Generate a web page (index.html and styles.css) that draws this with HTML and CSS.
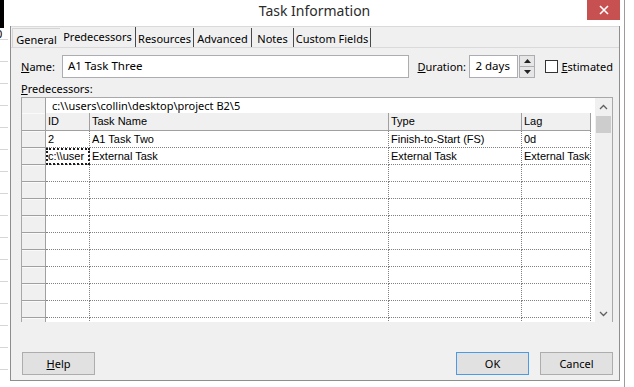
FILE: index.html
```html
<!DOCTYPE html>
<html lang="en">
<head>
    <meta charset="UTF-8">
    <title>Task Information</title>
    <link rel="stylesheet" href="styles.css">
</head>
<body>
    <div class="screen">
        <div class="sheet">
            <div class="sheet-top"></div>
            <div class="sheet-num">0</div>
            <div class="sheet-lines"></div>
        </div>
        <div class="dlg">
            <div class="titlebar">
                <span></span>
                <div class="title">Task Information</div>
                <div class="close">
                    <svg width="10" height="10" viewBox="0 0 10 10"><path d="M1 1L9 9M9 1L1 9" stroke="#fff" stroke-width="1.6"/></svg>
                </div>
            </div>
            <div class="client">
                <div class="tabs">
                    <div class="tab first">General</div>
                    <div class="tab sel">Predecessors</div>
                    <div class="tab">Resources</div>
                    <div class="tab">Advanced</div>
                    <div class="tab">Notes</div>
                    <div class="tab">Custom Fields</div>
                </div>
                <div class="page">
                    <div class="name-row">
                        <div class="lbl-name"><u>N</u>ame:</div>
                        <div class="inp inp-name">A1 Task Three</div>
                        <div class="lbl-dur"><u>D</u>uration:</div>
                        <div class="inp inp-dur">2 days</div>
                        <div class="spin">
                            <div class="spin-btn"><svg width="7" height="4" viewBox="0 0 7 4"><path d="M0 4L3.5 0L7 4Z" fill="#222"/></svg></div>
                            <div class="spin-btn"><svg width="7" height="4" viewBox="0 0 7 4"><path d="M0 0L3.5 4L7 0Z" fill="#222"/></svg></div>
                        </div>
                        <div class="check"></div>
                        <div class="est"><u>E</u>stimated</div>
                    </div>
                    <div class="pred-label"><u>P</u>redecessors:</div>
                    <div class="grid">
                        <div class="table">
                            <div class="editbar">
                                <div class="rh"></div>
                                <div class="edit">c:\\users\collin\desktop\project B2\5</div>
                            </div>
                            <div class="row head">
                                <div class="rh"></div>
                                <div class="cell">ID</div>
                                <div class="cell">Task Name</div>
                                <div class="cell">Type</div>
                                <div class="cell">Lag</div>
                            </div>
                            <div class="row">
                                <div class="rh"></div>
                                <div class="cell">2</div>
                                <div class="cell">A1 Task Two</div>
                                <div class="cell">Finish-to-Start (FS)</div>
                                <div class="cell">0d</div>
                            </div>
                            <div class="row">
                                <div class="rh"></div>
                                <div class="cell active">c:\\user</div>
                                <div class="cell">External Task</div>
                                <div class="cell">External Task</div>
                                <div class="cell">External Task</div>
                            </div>
                            <div class="row"><div class="rh"></div><div class="cell"></div><div class="cell"></div><div class="cell"></div><div class="cell"></div></div>
                            <div class="row"><div class="rh"></div><div class="cell"></div><div class="cell"></div><div class="cell"></div><div class="cell"></div></div>
                            <div class="row"><div class="rh"></div><div class="cell"></div><div class="cell"></div><div class="cell"></div><div class="cell"></div></div>
                            <div class="row"><div class="rh"></div><div class="cell"></div><div class="cell"></div><div class="cell"></div><div class="cell"></div></div>
                            <div class="row"><div class="rh"></div><div class="cell"></div><div class="cell"></div><div class="cell"></div><div class="cell"></div></div>
                            <div class="row"><div class="rh"></div><div class="cell"></div><div class="cell"></div><div class="cell"></div><div class="cell"></div></div>
                            <div class="row"><div class="rh"></div><div class="cell"></div><div class="cell"></div><div class="cell"></div><div class="cell"></div></div>
                            <div class="row"><div class="rh"></div><div class="cell"></div><div class="cell"></div><div class="cell"></div><div class="cell"></div></div>
                            <div class="row"><div class="rh"></div><div class="cell"></div><div class="cell"></div><div class="cell"></div><div class="cell"></div></div>
                            <div class="row"><div class="rh"></div><div class="cell"></div><div class="cell"></div><div class="cell"></div><div class="cell"></div></div>
                        </div>
                        <div class="vscroll">
                            <div class="sb-btn"><svg width="9" height="6" viewBox="0 0 9 6"><polyline points="1,5 4.5,1.5 8,5" fill="none" stroke="#606060" stroke-width="1.3"/></svg></div>
                            <div class="sb-thumb"></div>
                            <div class="sb-btn down"><svg width="9" height="6" viewBox="0 0 9 6"><polyline points="1,1 4.5,4.5 8,1" fill="none" stroke="#606060" stroke-width="1.3"/></svg></div>
                        </div>
                    </div>
                    <div class="buttons">
                        <div class="btn help"><u>H</u>elp</div>
                        <div class="btn ok">OK</div>
                        <div class="btn">Cancel</div>
                    </div>
                </div>
            </div>
        </div>
    </div>
</body>
</html>
```

FILE: styles.css
```css
*{
    margin: 0;
    padding: 0;
    box-sizing: border-box;
}
body{
    background: #fff;
    font-family: "Noto Sans", "Open Sans", sans-serif;
    font-size: 11px;
    color: #000;
}
.screen{
    display: flex;
    width: 634px;
    height: 387px;
    overflow: hidden;
}

/* app behind the dialog */
.sheet{
    width: 10px;
    flex: none;
    display: flex;
    flex-direction: column;
}
.sheet-top{
    width: 4px;
    height: 28px;
    background: #000;
}
.sheet-num{
    height: 11px;
    margin-left: -4px;
    font-size: 11px;
    line-height: 11px;
    color: #000;
}
.sheet-lines{
    flex: 1;
    width: 8px;
    background: repeating-linear-gradient(#d6d6d6 0 1px, transparent 1px 22px);
}

/* dialog */
.dlg{
    width: 615px;
    flex: none;
    border-right: 1px solid #9c9c9c;
    display: flex;
    flex-direction: column;
}
.titlebar{
    height: 26px;
    display: grid;
    grid-template-columns: 1fr auto 1fr;
    background: #fff;
}
.title{
    font-size: 14px;
    line-height: 21px;
    color: #2b2b2b;
    margin-left: -5px;
}
.close{
    justify-self: end;
    width: 33px;
    height: 20px;
    margin-right: 4px;
    background: #c75050;
    display: flex;
    align-items: center;
    justify-content: center;
}
.client{
    height: 355px;
    margin-right: 4px;
    background: #f0f0f0;
    border: 1px solid #8e8e8e;
    border-top: none;
    display: flex;
    flex-direction: column;
}

/* tabs */
.tabs{
    display: flex;
    height: 22px;
    padding-left: 1px;
    border-top: 1px solid #dadada;
    border-bottom: 1px solid #dadada;
}
.tab{
    line-height: 19px;
    padding-top: 1px;
    text-align: center;
    white-space: nowrap;
    border-right: 1px solid #4a4a4a;
    margin-top: 1px;
}
.tab.first{
    width: 48px;
    border: 1px solid #d4d4d4;
    border-bottom: none;
    border-right: none;
}
.tab.sel{
    width: 76px;
    padding-top: 0;
    margin-top: 0;
    background: #f0f0f0;
}
.tab:nth-child(3){ width: 58px; }
.tab:nth-child(4){ width: 58px; }
.tab:nth-child(5){ width: 42px; }
.tab:nth-child(6){ width: 77px; }

/* page body */
.page{
    flex: 1;
    padding: 7px 6px 0 10px;
    display: flex;
    flex-direction: column;
}
.name-row{
    display: flex;
    align-items: center;
    height: 23px;
}
.lbl-name{
    width: 41px;
}
.inp{
    height: 23px;
    border: 1px solid #abadb3;
    background: #fff;
    padding-left: 5px;
    line-height: 20px;
    font-size: 11.5px;
}
.inp-name{
    width: 347px;
}
.lbl-dur{
    width: 52px;
    margin-left: 9px;
}
.inp-dur{
    width: 49px;
}
.spin{
    width: 16px;
    height: 23px;
    margin-left: 1px;
    border: 1px solid #abadb3;
    display: flex;
    flex-direction: column;
    background: #e6e6e6;
}
.spin-btn{
    flex: 1;
    display: flex;
    align-items: center;
    justify-content: center;
}
.spin-btn + .spin-btn{
    border-top: 1px solid #abadb3;
}
.check{
    width: 13px;
    height: 13px;
    margin-left: 10px;
    border: 1px solid #333;
    background: #fff;
}
.est{
    margin-left: 3px;
}
.pred-label{
    margin-top: 3px;
    line-height: 15px;
    margin-bottom: 1px;
}

/* predecessor grid */
.grid{
    display: flex;
    height: 225px;
    border: 1px solid #a8a8a8;
    border-bottom: none;
    background: #fff;
}
.table{
    flex: 1;
    overflow: hidden;
}
.editbar{
    display: flex;
    height: 15px;
}
.editbar .rh{
    width: 24px;
    background: #f0f0f0;
    border-right: 1px solid #a0a0a0;
}
.edit{
    flex: 1;
    padding-left: 6px;
    line-height: 15px;
}
.row{
    display: grid;
    grid-template-columns: 24px 44px 299px 133px 69px;
    height: 17px;
    font-family: "Liberation Sans", Arial, sans-serif;
    font-size: 11px;
}
.row .rh{
    background: #f0f0f0;
    border-right: 1px solid #a0a0a0;
    border-bottom: 1px solid #a0a0a0;
    box-shadow: inset 0 1px #fafafa;
}
.cell{
    border-right: 1px dotted #808080;
    border-bottom: 1px dotted #808080;
    padding-left: 2px;
    line-height: 16px;
    white-space: nowrap;
    overflow: hidden;
}
.row.head{
    height: 18px;
}
.row.head .cell{
    background: #f0f0f0;
    border-right: 1px solid #a0a0a0;
    border-bottom: 1px solid #a0a0a0;
    line-height: 17px;
}
.cell.active{
    outline: 2px dotted #1a1a1a;
    outline-offset: -2px;
    padding-left: 2px;
}

/* scrollbar */
.vscroll{
    width: 17px;
    flex: none;
    background: #f0f0f0;
    display: flex;
    flex-direction: column;
}
.sb-btn{
    height: 17px;
    display: flex;
    align-items: center;
    justify-content: center;
}
.sb-btn.down{
    margin-top: auto;
}
.sb-thumb{
    height: 17px;
    margin: 1px 1px 0;
    background: #cdcdcd;
}

/* bottom buttons */
.buttons{
    display: flex;
    gap: 11px;
    margin-top: 30px;
}
.btn{
    width: 73px;
    height: 23px;
    border: 1px solid #adadad;
    background: #e1e1e1;
    text-align: center;
    line-height: 21px;
}
.btn.help{
    margin-left: 1px;
    margin-right: auto;
}
.btn.ok{
    border-color: #4a9be3;
}
```
